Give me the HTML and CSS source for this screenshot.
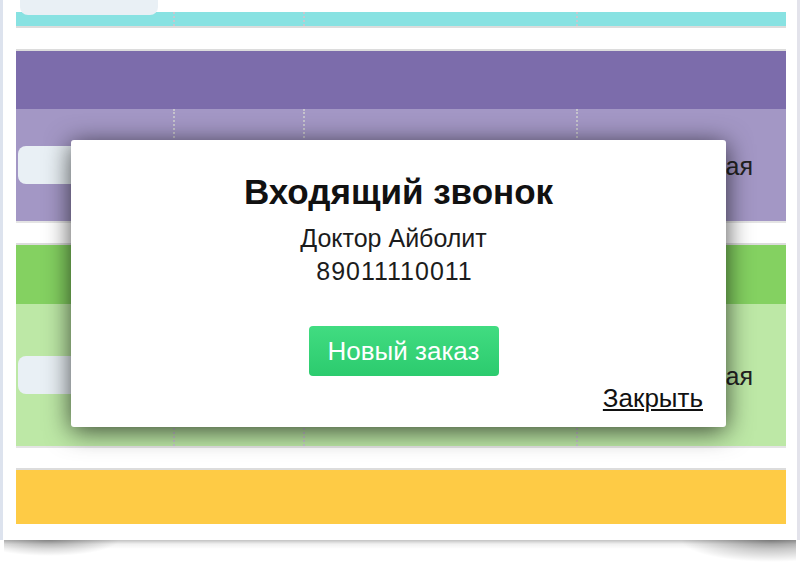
FILE: index.html
```html
<!DOCTYPE html>
<html lang="ru">
<head>
<meta charset="utf-8">
<title>Входящий звонок</title>
<link rel="stylesheet" href="styles.css">
</head>
<body>
<div class="page">
<div class="frame">
  <div class="board">
    <section class="sec sec-teal">
      <div class="row row-teal">
        <div class="cell"><div class="pill pill-top"></div></div>
        <div class="cell"></div>
        <div class="cell"></div>
        <div class="cell"></div>
      </div>
    </section>

    <section class="sec sec-gap">
      <div class="head head-purple"></div>
      <div class="row row-purple">
        <div class="cell"><div class="pill"></div></div>
        <div class="cell"></div>
        <div class="cell"></div>
        <div class="cell cell-status">Новая</div>
      </div>
    </section>

    <section class="sec sec-gap">
      <div class="head head-green"></div>
      <div class="row row-green">
        <div class="cell"><div class="pill"></div></div>
        <div class="cell"></div>
        <div class="cell"></div>
        <div class="cell cell-status">Новая</div>
      </div>
    </section>

    <section class="sec sec-gap sec-last">
      <div class="head head-yellow"></div>
    </section>
  </div>

  <div class="modal">
    <h1 class="modal-title">Входящий звонок</h1>
    <p class="modal-line modal-name">Доктор Айболит</p>
    <p class="modal-line modal-phone">89011110011</p>
    <div class="modal-actions">
      <button class="btn-order" type="button">Новый заказ</button>
    </div>
    <div class="modal-footer">
      <a class="modal-close" href="#">Закрыть</a>
    </div>
  </div>
</div>
</div>
</body>
</html>
```

FILE: styles.css
```css
html, body {
  margin: 0;
  padding: 0;
  background: #ffffff;
  font-family: "Liberation Sans", Arial, sans-serif;
}

.page {
  position: relative;
  width: 800px;
  height: 568px;
}

.page::after {
  content: "";
  position: absolute;
  left: 4px;
  right: 4px;
  top: 540px;
  height: 24px;
  background:
    radial-gradient(ellipse 70px 16px at 45px 0, rgba(0, 0, 0, 0.32), rgba(0, 0, 0, 0)),
    radial-gradient(ellipse 90px 22px at calc(100% - 25px) 0, rgba(0, 0, 0, 0.38), rgba(0, 0, 0, 0)),
    linear-gradient(rgba(0, 0, 0, 0.24), rgba(0, 0, 0, 0.06) 4px, rgba(0, 0, 0, 0) 9px);
}

.frame {
  position: relative;
  width: 794px;
  height: 540px;
  background: #ffffff;
  border-left: 3px solid #dde3ee;
  border-right: 3px solid #e3e3eb;
  overflow: hidden;
}

.board {
  margin-left: 13px;
  width: 770px;
  display: flex;
  flex-direction: column;
}

.sec {
  display: flex;
  flex-direction: column;
}

.sec-teal {
  margin-top: 12px;
  border-bottom: 2px solid #dcdcdc;
}

.sec-gap {
  margin-top: 21px;
  border-top: 2px solid #dcdcdc;
}

.sec-gap + .sec-gap {
  margin-top: 20px;
}

.sec-gap .row {
  border-bottom: 2px solid #e4e4e4;
}

.row {
  display: grid;
  grid-template-columns: 158px 130px 273px 1fr;
}

.cell {
  display: flex;
  align-items: center;
}

.cell + .cell {
  border-left: 2px dotted rgba(200, 198, 206, 0.95);
  margin-left: -1px;
}

.row-teal {
  height: 14px;
  background: #88e2e2;
}

.row-teal .cell {
  align-items: flex-start;
}

.head-purple {
  height: 58px;
  background: #7c6cab;
}

.row-purple {
  height: 112px;
  background: #a397c5;
}

.head-green {
  height: 59px;
  background: #84d161;
}

.row-green {
  height: 142px;
  background: #bde8a6;
}

.head-yellow {
  height: 54px;
  background: #fecb45;
}

.pill {
  width: 140px;
  height: 38px;
  margin-left: 2px;
  border-radius: 8px;
  background: #e9f0f5;
}

.pill-top {
  margin-top: -35px;
  margin-left: 4px;
  width: 138px;
}

.cell-status {
  justify-content: flex-end;
  padding-right: 33px;
  padding-top: 3px;
  font-size: 25px;
  color: #222222;
}

.modal {
  position: absolute;
  left: 68px;
  top: 140px;
  width: 655px;
  height: 287px;
  box-sizing: border-box;
  padding-top: 32px;
  background: #ffffff;
  border-radius: 3px;
  box-shadow: 0 4px 26px rgba(0, 0, 0, 0.7);
  text-align: center;
  color: #111111;
}

.modal-title {
  margin: 0;
  font-size: 35px;
  line-height: 40px;
  font-weight: bold;
}

.modal-line {
  margin: 0;
  font-size: 25px;
  line-height: 33px;
  color: #1c1c1c;
}

.modal-name {
  margin-top: 10px;
  padding-right: 10px;
}

.modal-phone {
  padding-right: 8px;
  letter-spacing: 1px;
}

.modal-actions {
  margin-top: 38px;
  display: flex;
  justify-content: center;
}

.btn-order {
  width: 190px;
  height: 50px;
  margin-left: 10px;
  padding: 0;
  border: 0;
  border-radius: 4px;
  background: linear-gradient(#41dc81, #2ccb6e);
  color: #ffffff;
  font-family: "Liberation Sans", Arial, sans-serif;
  font-size: 26px;
  line-height: 50px;
}

.modal-footer {
  margin-top: 7px;
  display: flex;
  justify-content: flex-end;
  padding-right: 23px;
}

.modal-close {
  font-size: 26px;
  line-height: 30px;
  color: #111111;
  text-decoration: underline;
}
```
